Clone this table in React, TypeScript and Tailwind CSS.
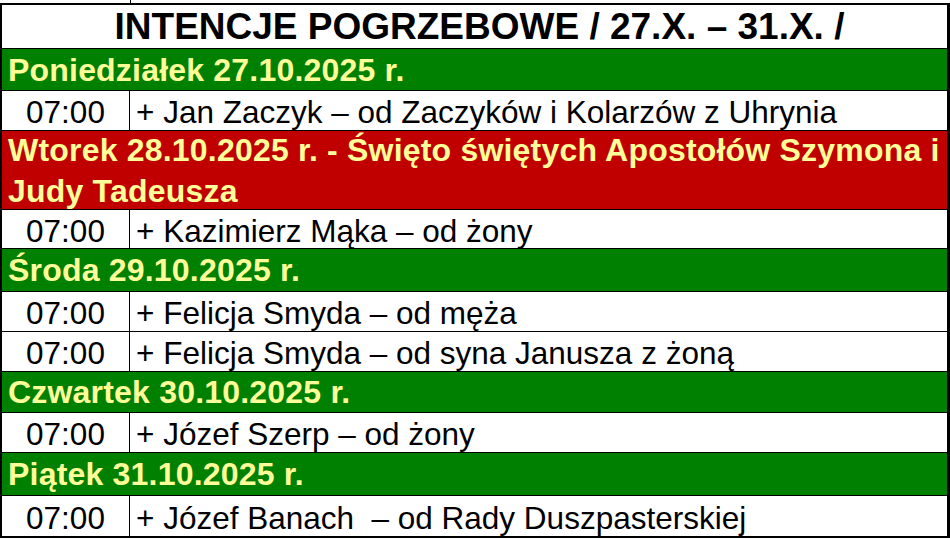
const days = [
  {
    title: ["Poniedziałek 27.10.2025 r."],
    tone: "green",
    h: "h-[42px]",
    rows: [{ h: "h-[40px]", text: "+ Jan Zaczyk – od Zaczyków i Kolarzów z Uhrynia" }],
  },
  {
    title: ["Wtorek 28.10.2025 r. - Święto świętych Apostołów Szymona i", "Judy Tadeusza"],
    tone: "red",
    h: "h-[79px]",
    rows: [{ h: "h-[39px]", text: "+ Kazimierz Mąka – od żony" }],
  },
  {
    title: ["Środa 29.10.2025 r."],
    tone: "green",
    h: "h-[43px]",
    rows: [
      { h: "h-[40px]", text: "+ Felicja Smyda – od męża" },
      { h: "h-[40px]", text: "+ Felicja Smyda – od syna Janusza z żoną" },
    ],
  },
  {
    title: ["Czwartek 30.10.2025 r."],
    tone: "green",
    h: "h-[41px]",
    rows: [{ h: "h-[40px]", text: "+ Józef Szerp – od żony" }],
  },
  {
    title: ["Piątek 31.10.2025 r."],
    tone: "green",
    h: "h-[43px]",
    rows: [{ h: "h-[40px]", text: "+ Józef Banach  – od Rady Duszpasterskiej", last: true }],
  },
];

function Row({ h, text, last }: { h: string; text: string; last?: boolean }) {
  return (
    <div className={`${h} flex text-[31.5px] ${last ? "" : "border-b border-black"}`}>
      <div className="w-[128px] border-r border-black flex items-center justify-center pt-[5px]">07:00</div>
      <div className="flex-1 flex items-center pl-[6px] pt-[5px] whitespace-pre">{text}</div>
    </div>
  );
}

export default function App() {
  return (
    <div className="w-[950px] h-[540px] bg-white overflow-hidden text-black font-['Liberation_Sans',Arial,sans-serif]">
      <div className="h-[3px] flex">
        <div className="w-[130px]" />
        <div className="w-px bg-black" />
      </div>
      <div className="border-t-2 border-b-2 border-l-2 border-r-[3px] border-black">
        <div className="h-[44px] border-b border-black flex items-center justify-center pl-[10px] text-[37px] font-bold">
          INTENCJE POGRZEBOWE / 27.X. – 31.X. /
        </div>
        {days.map((day, i) => (
          <div key={i}>
            <div
              className={`${day.h} border-b border-black flex flex-col justify-center pl-[6px] pt-[1px] text-[32px] tracking-[0.2px] font-bold leading-[41px] text-[#ffff99] ${
                day.tone === "red" ? "bg-[#c00000]" : "bg-[#008000]"
              }`}
            >
              {day.title.map((line, j) => (
                <div key={j} className="whitespace-nowrap">
                  {line}
                </div>
              ))}
            </div>
            {day.rows.map((row, j) => (
              <Row key={j} {...row} />
            ))}
          </div>
        ))}
      </div>
    </div>
  );
}
